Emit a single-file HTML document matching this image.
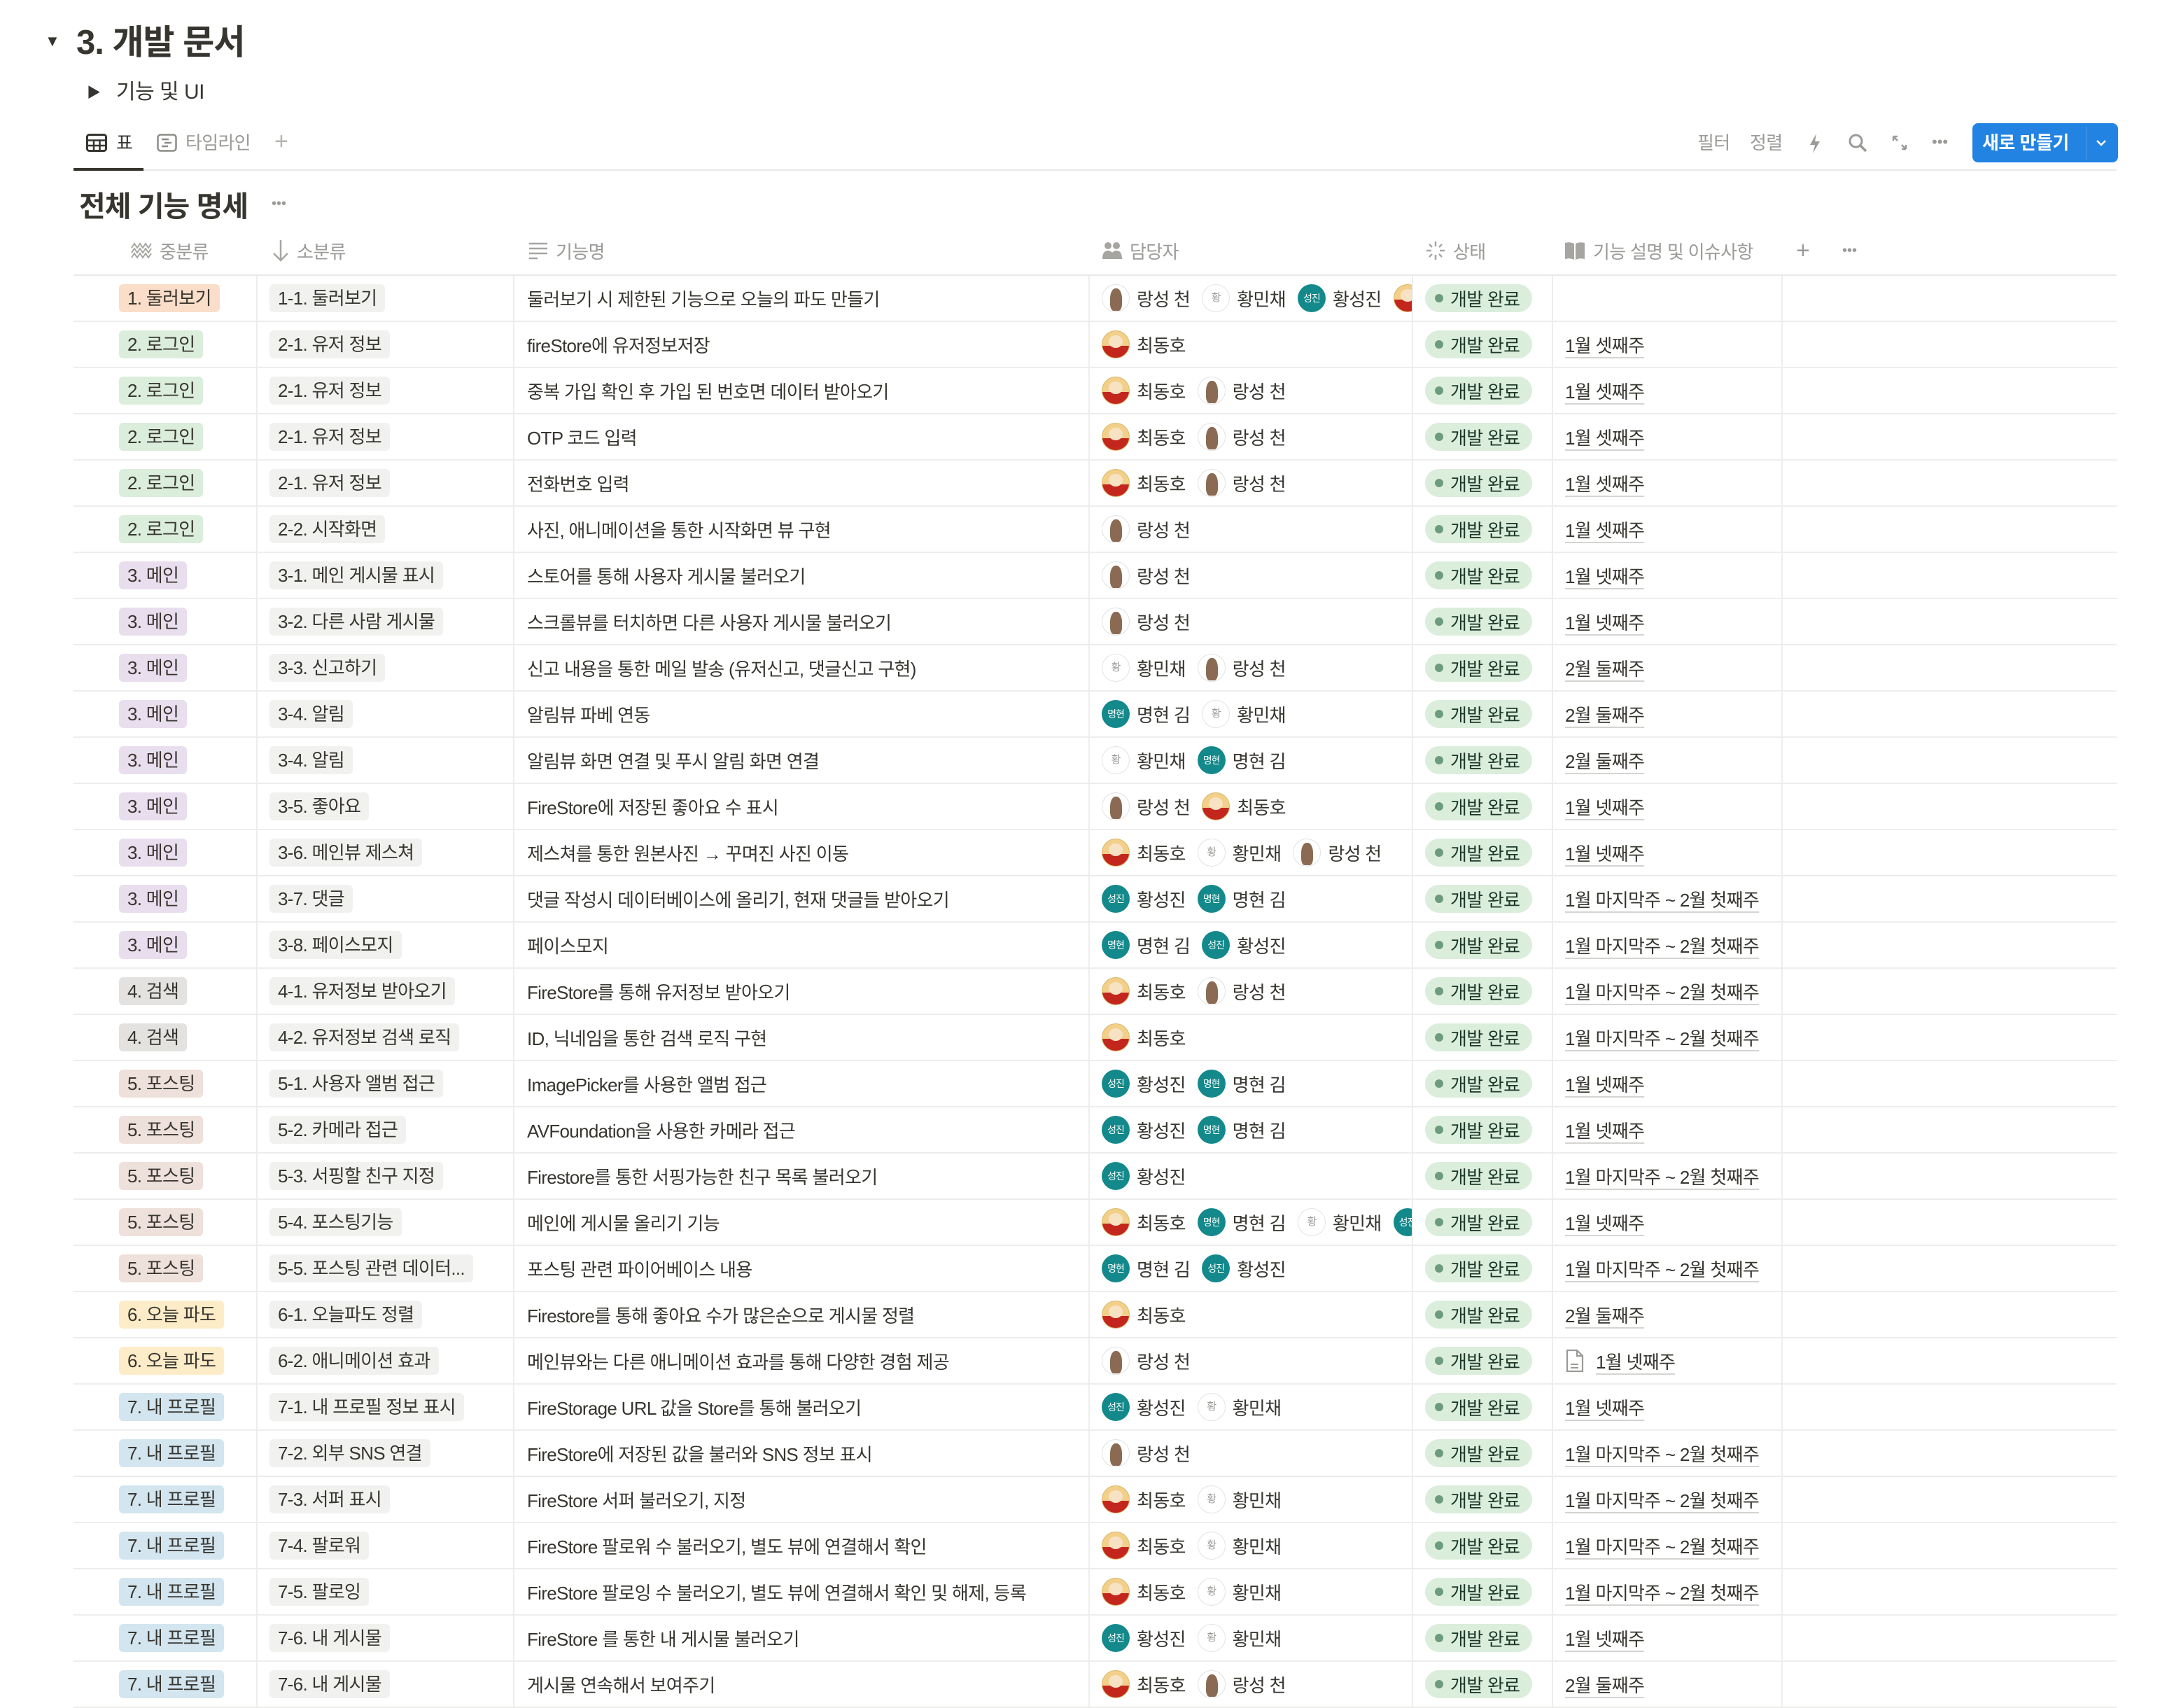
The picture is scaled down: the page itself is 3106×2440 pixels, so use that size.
<!DOCTYPE html>
<html><head><meta charset="utf-8"><style>
*{margin:0;padding:0;box-sizing:border-box}
body{width:3106px;height:2438px;background:#fff;position:relative;overflow:hidden;font-family:"Liberation Sans","Noto Sans CJK KR",sans-serif;color:#37352f;font-size:26px;letter-spacing:-0.7px}
.abs{position:absolute}
.g{color:#9b9a97}
#tbl{position:absolute;left:105px;top:392px;width:2919px;border-top:2px solid #e9e9e7}
.r{display:flex;height:66px;border-bottom:2px solid #ededec}
.c{height:64px;display:flex;align-items:center;overflow:hidden;white-space:nowrap;border-right:2px solid #ededec;padding-left:17px}
.c1{width:263px;padding-left:65px}
.c2{width:367px}
.c3{width:822px;padding-left:18px}
.c4{width:462px}
.c5{width:200px}
.c6{width:328px}
.c7{width:477px;border-right:none}
.t{display:inline-block;height:40px;line-height:40px;padding:0 12px;border-radius:6px}
.or{background:#fadec9}.gr{background:#dbeddb}.pu{background:#e8deee}.gy{background:#e3e2e0}.br{background:#eee0da}.ye{background:#fdecc8}.bl{background:#d3e5ef}.df{background:#f1f1ef}
.p{display:inline-flex;align-items:center;margin-right:17px}
.av{display:inline-block;width:40px;height:40px;border-radius:50%;margin-right:10px;position:relative;overflow:hidden;flex:none;font-style:normal;text-align:center;letter-spacing:-1px}
.ac{background:linear-gradient(#f2d08a 0 55%,#c3261d 55%);border:1px solid #d9b86a}
.ac::before{content:"";position:absolute;left:9px;top:6px;width:20px;height:18px;border-radius:50%;background:#f7e2c4}
.ar{background:#fff;border:1px solid #e2e2e2}
.ar::before{content:"";position:absolute;left:11px;top:5px;width:17px;height:32px;border-radius:45% 45% 30% 30%;background:#8a6a52}
.ah{background:#fff;border:1px solid #e3e3e3;color:#9b9a97;font-size:15px;line-height:38px}
.at{background:#13898b;color:#fff;font-size:14px;line-height:40px}
.st{display:inline-flex;align-items:center;height:40px;padding:0 18px 0 14px;border-radius:20px;background:#dbeddb;color:#1c3829}
.st::before{content:"";width:12px;height:12px;border-radius:50%;background:#6c9b7d;margin-right:10px}
.d{text-decoration:underline;text-decoration-color:#d5d4d1;text-decoration-thickness:2px;text-underline-offset:7px}
.h{position:absolute;top:340px;height:36px;display:flex;align-items:center;color:#9b9a97}
.h svg{margin-right:10px}
</style></head><body>

<div class="abs" style="left:64px;top:46px;font-size:22px;color:#37352f">▼</div>
<div class="abs" style="left:109px;top:28px;font-size:49px;font-weight:bold;letter-spacing:-1px;line-height:66px">3. 개발 문서</div>
<div class="abs" style="left:124px;top:116px;font-size:20px">▶</div>
<div class="abs" style="left:166px;top:112px;font-size:30px;line-height:40px;letter-spacing:-0.5px">기능 및 UI</div>

<svg class="abs" style="left:123px;top:191px" width="30" height="26" viewBox="0 0 30 26"><rect x="1.5" y="1.5" width="27" height="23" rx="3" fill="none" stroke="#37352f" stroke-width="3"/><path d="M1.5 9.5H28.5M1.5 17H28.5M11 9.5V24.5M19.5 9.5V24.5" stroke="#37352f" stroke-width="2.5"/></svg>
<div class="abs" style="left:166px;top:186px;font-size:26px;line-height:36px">표</div>
<svg class="abs" style="left:224px;top:191px" width="29" height="26" viewBox="0 0 29 26"><rect x="1.5" y="1.5" width="26" height="23" rx="4" fill="none" stroke="#8c8b87" stroke-width="2.5"/><path d="M7 8H17M11 13H21M7 18H16" stroke="#8c8b87" stroke-width="2.5"/></svg>
<div class="abs g" style="left:265px;top:186px;font-size:26px;line-height:36px">타임라인</div>
<div class="abs" style="left:392px;top:182px;font-size:34px;color:#b5b4b0;line-height:40px">+</div>
<div class="abs" style="left:105px;top:242px;width:2919px;height:2px;background:#e9e9e7"></div>
<div class="abs" style="left:105px;top:240px;width:100px;height:4px;background:#37352f"></div>

<div class="abs g" style="left:2425px;top:186px;line-height:36px">필터</div>
<div class="abs g" style="left:2500px;top:186px;line-height:36px">정렬</div>
<svg class="abs" style="left:2584px;top:190px" width="18" height="30" viewBox="0 0 18 30"><path d="M11 1L2 17H9L6 29L16 12H9Z" fill="#9b9a97"/></svg>
<svg class="abs" style="left:2640px;top:190px" width="28" height="28" viewBox="0 0 28 28"><circle cx="11.5" cy="11.5" r="8.5" fill="none" stroke="#9b9a97" stroke-width="3"/><path d="M18 18L26 26" stroke="#9b9a97" stroke-width="3.5"/></svg>
<svg class="abs" style="left:2702px;top:192px" width="24" height="24" viewBox="0 0 24 24"><path d="M3 3L9 9M3 3V9M3 3H9M21 21L15 15M21 21V15M21 21H15" stroke="#9b9a97" stroke-width="2.5" fill="none"/></svg>
<div class="abs g" style="left:2760px;top:190px;font-size:22px;letter-spacing:0">•••</div>
<div class="abs" style="left:2818px;top:176px;width:208px;height:56px;border-radius:8px;background:#2383e2"></div>
<div class="abs" style="left:2832px;top:186px;color:#fff;font-weight:bold;line-height:36px;letter-spacing:-0.5px">새로 만들기</div>
<div class="abs" style="left:2980px;top:180px;width:1px;height:48px;background:#4a9aea"></div>
<svg class="abs" style="left:2993px;top:197px" width="18" height="14" viewBox="0 0 18 14"><path d="M3 4L9 10L15 4" stroke="#fff" stroke-width="2.5" fill="none"/></svg>

<div class="abs" style="left:113px;top:268px;font-size:41px;font-weight:bold;line-height:54px;letter-spacing:-1px">전체 기능 명세</div>
<div class="abs" style="left:388px;top:280px;font-size:20px;color:#9b9a97;letter-spacing:0">•••</div>

<div class="h" style="left:186px"><svg width="32" height="26" viewBox="0 0 32 26"><path d="M2 9L6 3L10 9L14 3L18 9L22 3L26 9L30 3M2 16L6 10L10 16L14 10L18 16L22 10L26 16L30 10M2 23L6 17L10 23L14 17L18 23L22 17L26 23L30 17" stroke="#a6a5a1" stroke-width="2" fill="none"/></svg>중분류</div>
<div class="h" style="left:388px"><svg width="26" height="34" viewBox="0 0 26 34"><path d="M13 2V31M3 21L13 31L23 21" stroke="#a6a5a1" stroke-width="2.5" fill="none"/></svg>소분류</div>
<div class="h" style="left:754px"><svg width="30" height="28" viewBox="0 0 30 28"><path d="M2 4H28M2 11H28M2 18H28M2 25H14" stroke="#a6a5a1" stroke-width="2.5"/></svg>기능명</div>
<div class="h" style="left:1574px"><svg width="30" height="26" viewBox="0 0 30 26"><circle cx="9" cy="6" r="5" fill="#a6a5a1"/><circle cx="21" cy="6" r="5" fill="#a6a5a1"/><path d="M1 25Q1 13 9 13Q17 13 17 25ZM13 25Q13 13 21 13Q29 13 29 25Z" fill="#a6a5a1"/></svg>담당자</div>
<div class="h" style="left:2036px"><svg width="30" height="30" viewBox="0 0 30 30"><path d="M15 2V9M15 21V28M2 15H9M21 15H28M6 6L10 10M20 20L24 24M24 6L20 10M10 20L6 24" stroke="#a6a5a1" stroke-width="2.5"/></svg>상태</div>
<div class="h" style="left:2234px"><svg width="32" height="28" viewBox="0 0 32 28"><path d="M2 3Q9 1 15 4V27Q9 24 2 26ZM17 4Q23 1 30 3V26Q23 24 17 27Z" fill="#a6a5a1"/></svg>기능 설명 및 이슈사항</div>
<div class="h" style="left:2566px;font-size:34px">+</div>
<div class="h" style="left:2632px;font-size:20px;letter-spacing:0">•••</div>

<div id="tbl">
<div class="r"><div class="c c1"><span class="t or">1. 둘러보기</span></div><div class="c c2"><span class="t df">1-1. 둘러보기</span></div><div class="c c3">둘러보기 시 제한된 기능으로 오늘의 파도 만들기</div><div class="c c4"><span class="p"><i class="av ar"></i>랑성 천</span><span class="p"><i class="av ah">황</i>황민채</span><span class="p"><i class="av at">성진</i>황성진</span><span class="p"><i class="av ac"></i>최동호</span></div><div class="c c5"><span class="st">개발 완료</span></div><div class="c c6"></div><div class="c c7"></div></div>
<div class="r"><div class="c c1"><span class="t gr">2. 로그인</span></div><div class="c c2"><span class="t df">2-1. 유저 정보</span></div><div class="c c3">fireStore에 유저정보저장</div><div class="c c4"><span class="p"><i class="av ac"></i>최동호</span></div><div class="c c5"><span class="st">개발 완료</span></div><div class="c c6"><span class="d">1월 셋째주</span></div><div class="c c7"></div></div>
<div class="r"><div class="c c1"><span class="t gr">2. 로그인</span></div><div class="c c2"><span class="t df">2-1. 유저 정보</span></div><div class="c c3">중복 가입 확인 후 가입 된 번호면 데이터 받아오기</div><div class="c c4"><span class="p"><i class="av ac"></i>최동호</span><span class="p"><i class="av ar"></i>랑성 천</span></div><div class="c c5"><span class="st">개발 완료</span></div><div class="c c6"><span class="d">1월 셋째주</span></div><div class="c c7"></div></div>
<div class="r"><div class="c c1"><span class="t gr">2. 로그인</span></div><div class="c c2"><span class="t df">2-1. 유저 정보</span></div><div class="c c3">OTP 코드 입력</div><div class="c c4"><span class="p"><i class="av ac"></i>최동호</span><span class="p"><i class="av ar"></i>랑성 천</span></div><div class="c c5"><span class="st">개발 완료</span></div><div class="c c6"><span class="d">1월 셋째주</span></div><div class="c c7"></div></div>
<div class="r"><div class="c c1"><span class="t gr">2. 로그인</span></div><div class="c c2"><span class="t df">2-1. 유저 정보</span></div><div class="c c3">전화번호 입력</div><div class="c c4"><span class="p"><i class="av ac"></i>최동호</span><span class="p"><i class="av ar"></i>랑성 천</span></div><div class="c c5"><span class="st">개발 완료</span></div><div class="c c6"><span class="d">1월 셋째주</span></div><div class="c c7"></div></div>
<div class="r"><div class="c c1"><span class="t gr">2. 로그인</span></div><div class="c c2"><span class="t df">2-2. 시작화면</span></div><div class="c c3">사진, 애니메이션을 통한 시작화면 뷰 구현</div><div class="c c4"><span class="p"><i class="av ar"></i>랑성 천</span></div><div class="c c5"><span class="st">개발 완료</span></div><div class="c c6"><span class="d">1월 셋째주</span></div><div class="c c7"></div></div>
<div class="r"><div class="c c1"><span class="t pu">3. 메인</span></div><div class="c c2"><span class="t df">3-1. 메인 게시물 표시</span></div><div class="c c3">스토어를 통해 사용자 게시물 불러오기</div><div class="c c4"><span class="p"><i class="av ar"></i>랑성 천</span></div><div class="c c5"><span class="st">개발 완료</span></div><div class="c c6"><span class="d">1월 넷째주</span></div><div class="c c7"></div></div>
<div class="r"><div class="c c1"><span class="t pu">3. 메인</span></div><div class="c c2"><span class="t df">3-2. 다른 사람 게시물</span></div><div class="c c3">스크롤뷰를 터치하면 다른 사용자 게시물 불러오기</div><div class="c c4"><span class="p"><i class="av ar"></i>랑성 천</span></div><div class="c c5"><span class="st">개발 완료</span></div><div class="c c6"><span class="d">1월 넷째주</span></div><div class="c c7"></div></div>
<div class="r"><div class="c c1"><span class="t pu">3. 메인</span></div><div class="c c2"><span class="t df">3-3. 신고하기</span></div><div class="c c3">신고 내용을 통한 메일 발송 (유저신고, 댓글신고 구현)</div><div class="c c4"><span class="p"><i class="av ah">황</i>황민채</span><span class="p"><i class="av ar"></i>랑성 천</span></div><div class="c c5"><span class="st">개발 완료</span></div><div class="c c6"><span class="d">2월 둘째주</span></div><div class="c c7"></div></div>
<div class="r"><div class="c c1"><span class="t pu">3. 메인</span></div><div class="c c2"><span class="t df">3-4. 알림</span></div><div class="c c3">알림뷰 파베 연동</div><div class="c c4"><span class="p"><i class="av at">명현</i>명현 김</span><span class="p"><i class="av ah">황</i>황민채</span></div><div class="c c5"><span class="st">개발 완료</span></div><div class="c c6"><span class="d">2월 둘째주</span></div><div class="c c7"></div></div>
<div class="r"><div class="c c1"><span class="t pu">3. 메인</span></div><div class="c c2"><span class="t df">3-4. 알림</span></div><div class="c c3">알림뷰 화면 연결 및 푸시 알림 화면 연결</div><div class="c c4"><span class="p"><i class="av ah">황</i>황민채</span><span class="p"><i class="av at">명현</i>명현 김</span></div><div class="c c5"><span class="st">개발 완료</span></div><div class="c c6"><span class="d">2월 둘째주</span></div><div class="c c7"></div></div>
<div class="r"><div class="c c1"><span class="t pu">3. 메인</span></div><div class="c c2"><span class="t df">3-5. 좋아요</span></div><div class="c c3">FireStore에 저장된 좋아요 수 표시</div><div class="c c4"><span class="p"><i class="av ar"></i>랑성 천</span><span class="p"><i class="av ac"></i>최동호</span></div><div class="c c5"><span class="st">개발 완료</span></div><div class="c c6"><span class="d">1월 넷째주</span></div><div class="c c7"></div></div>
<div class="r"><div class="c c1"><span class="t pu">3. 메인</span></div><div class="c c2"><span class="t df">3-6. 메인뷰 제스쳐</span></div><div class="c c3">제스쳐를 통한 원본사진 → 꾸며진 사진 이동</div><div class="c c4"><span class="p"><i class="av ac"></i>최동호</span><span class="p"><i class="av ah">황</i>황민채</span><span class="p"><i class="av ar"></i>랑성 천</span></div><div class="c c5"><span class="st">개발 완료</span></div><div class="c c6"><span class="d">1월 넷째주</span></div><div class="c c7"></div></div>
<div class="r"><div class="c c1"><span class="t pu">3. 메인</span></div><div class="c c2"><span class="t df">3-7. 댓글</span></div><div class="c c3">댓글 작성시 데이터베이스에 올리기, 현재 댓글들 받아오기</div><div class="c c4"><span class="p"><i class="av at">성진</i>황성진</span><span class="p"><i class="av at">명현</i>명현 김</span></div><div class="c c5"><span class="st">개발 완료</span></div><div class="c c6"><span class="d">1월 마지막주 ~ 2월 첫째주</span></div><div class="c c7"></div></div>
<div class="r"><div class="c c1"><span class="t pu">3. 메인</span></div><div class="c c2"><span class="t df">3-8. 페이스모지</span></div><div class="c c3">페이스모지</div><div class="c c4"><span class="p"><i class="av at">명현</i>명현 김</span><span class="p"><i class="av at">성진</i>황성진</span></div><div class="c c5"><span class="st">개발 완료</span></div><div class="c c6"><span class="d">1월 마지막주 ~ 2월 첫째주</span></div><div class="c c7"></div></div>
<div class="r"><div class="c c1"><span class="t gy">4. 검색</span></div><div class="c c2"><span class="t df">4-1. 유저정보 받아오기</span></div><div class="c c3">FireStore를 통해 유저정보 받아오기</div><div class="c c4"><span class="p"><i class="av ac"></i>최동호</span><span class="p"><i class="av ar"></i>랑성 천</span></div><div class="c c5"><span class="st">개발 완료</span></div><div class="c c6"><span class="d">1월 마지막주 ~ 2월 첫째주</span></div><div class="c c7"></div></div>
<div class="r"><div class="c c1"><span class="t gy">4. 검색</span></div><div class="c c2"><span class="t df">4-2. 유저정보 검색 로직</span></div><div class="c c3">ID, 닉네임을 통한 검색 로직 구현</div><div class="c c4"><span class="p"><i class="av ac"></i>최동호</span></div><div class="c c5"><span class="st">개발 완료</span></div><div class="c c6"><span class="d">1월 마지막주 ~ 2월 첫째주</span></div><div class="c c7"></div></div>
<div class="r"><div class="c c1"><span class="t br">5. 포스팅</span></div><div class="c c2"><span class="t df">5-1. 사용자 앨범 접근</span></div><div class="c c3">ImagePicker를 사용한 앨범 접근</div><div class="c c4"><span class="p"><i class="av at">성진</i>황성진</span><span class="p"><i class="av at">명현</i>명현 김</span></div><div class="c c5"><span class="st">개발 완료</span></div><div class="c c6"><span class="d">1월 넷째주</span></div><div class="c c7"></div></div>
<div class="r"><div class="c c1"><span class="t br">5. 포스팅</span></div><div class="c c2"><span class="t df">5-2. 카메라 접근</span></div><div class="c c3">AVFoundation을 사용한 카메라 접근</div><div class="c c4"><span class="p"><i class="av at">성진</i>황성진</span><span class="p"><i class="av at">명현</i>명현 김</span></div><div class="c c5"><span class="st">개발 완료</span></div><div class="c c6"><span class="d">1월 넷째주</span></div><div class="c c7"></div></div>
<div class="r"><div class="c c1"><span class="t br">5. 포스팅</span></div><div class="c c2"><span class="t df">5-3. 서핑할 친구 지정</span></div><div class="c c3">Firestore를 통한 서핑가능한 친구 목록 불러오기</div><div class="c c4"><span class="p"><i class="av at">성진</i>황성진</span></div><div class="c c5"><span class="st">개발 완료</span></div><div class="c c6"><span class="d">1월 마지막주 ~ 2월 첫째주</span></div><div class="c c7"></div></div>
<div class="r"><div class="c c1"><span class="t br">5. 포스팅</span></div><div class="c c2"><span class="t df">5-4. 포스팅기능</span></div><div class="c c3">메인에 게시물 올리기 기능</div><div class="c c4"><span class="p"><i class="av ac"></i>최동호</span><span class="p"><i class="av at">명현</i>명현 김</span><span class="p"><i class="av ah">황</i>황민채</span><span class="p"><i class="av at">성진</i>황성진</span></div><div class="c c5"><span class="st">개발 완료</span></div><div class="c c6"><span class="d">1월 넷째주</span></div><div class="c c7"></div></div>
<div class="r"><div class="c c1"><span class="t br">5. 포스팅</span></div><div class="c c2"><span class="t df">5-5. 포스팅 관련 데이터...</span></div><div class="c c3">포스팅 관련 파이어베이스 내용</div><div class="c c4"><span class="p"><i class="av at">명현</i>명현 김</span><span class="p"><i class="av at">성진</i>황성진</span></div><div class="c c5"><span class="st">개발 완료</span></div><div class="c c6"><span class="d">1월 마지막주 ~ 2월 첫째주</span></div><div class="c c7"></div></div>
<div class="r"><div class="c c1"><span class="t ye">6. 오늘 파도</span></div><div class="c c2"><span class="t df">6-1. 오늘파도 정렬</span></div><div class="c c3">Firestore를 통해 좋아요 수가 많은순으로 게시물 정렬</div><div class="c c4"><span class="p"><i class="av ac"></i>최동호</span></div><div class="c c5"><span class="st">개발 완료</span></div><div class="c c6"><span class="d">2월 둘째주</span></div><div class="c c7"></div></div>
<div class="r"><div class="c c1"><span class="t ye">6. 오늘 파도</span></div><div class="c c2"><span class="t df">6-2. 애니메이션 효과</span></div><div class="c c3">메인뷰와는 다른 애니메이션 효과를 통해 다양한 경험 제공</div><div class="c c4"><span class="p"><i class="av ar"></i>랑성 천</span></div><div class="c c5"><span class="st">개발 완료</span></div><div class="c c6"><svg width="28" height="34" viewBox="0 0 28 34" style="margin-right:16px"><path d="M3 2H17L25 10V32H3Z M17 2V10H25" fill="none" stroke="#9b9a97" stroke-width="2.2"/><path d="M8 22H19M8 27H19" stroke="#9b9a97" stroke-width="2"/></svg><span class="d">1월 넷째주</span></div><div class="c c7"></div></div>
<div class="r"><div class="c c1"><span class="t bl">7. 내 프로필</span></div><div class="c c2"><span class="t df">7-1. 내 프로필 정보 표시</span></div><div class="c c3">FireStorage URL 값을 Store를 통해 불러오기</div><div class="c c4"><span class="p"><i class="av at">성진</i>황성진</span><span class="p"><i class="av ah">황</i>황민채</span></div><div class="c c5"><span class="st">개발 완료</span></div><div class="c c6"><span class="d">1월 넷째주</span></div><div class="c c7"></div></div>
<div class="r"><div class="c c1"><span class="t bl">7. 내 프로필</span></div><div class="c c2"><span class="t df">7-2. 외부 SNS 연결</span></div><div class="c c3">FireStore에 저장된 값을 불러와 SNS 정보 표시</div><div class="c c4"><span class="p"><i class="av ar"></i>랑성 천</span></div><div class="c c5"><span class="st">개발 완료</span></div><div class="c c6"><span class="d">1월 마지막주 ~ 2월 첫째주</span></div><div class="c c7"></div></div>
<div class="r"><div class="c c1"><span class="t bl">7. 내 프로필</span></div><div class="c c2"><span class="t df">7-3. 서퍼 표시</span></div><div class="c c3">FireStore 서퍼 불러오기, 지정</div><div class="c c4"><span class="p"><i class="av ac"></i>최동호</span><span class="p"><i class="av ah">황</i>황민채</span></div><div class="c c5"><span class="st">개발 완료</span></div><div class="c c6"><span class="d">1월 마지막주 ~ 2월 첫째주</span></div><div class="c c7"></div></div>
<div class="r"><div class="c c1"><span class="t bl">7. 내 프로필</span></div><div class="c c2"><span class="t df">7-4. 팔로워</span></div><div class="c c3">FireStore 팔로워 수 불러오기, 별도 뷰에 연결해서 확인</div><div class="c c4"><span class="p"><i class="av ac"></i>최동호</span><span class="p"><i class="av ah">황</i>황민채</span></div><div class="c c5"><span class="st">개발 완료</span></div><div class="c c6"><span class="d">1월 마지막주 ~ 2월 첫째주</span></div><div class="c c7"></div></div>
<div class="r"><div class="c c1"><span class="t bl">7. 내 프로필</span></div><div class="c c2"><span class="t df">7-5. 팔로잉</span></div><div class="c c3">FireStore 팔로잉 수 불러오기, 별도 뷰에 연결해서 확인 및 해제, 등록</div><div class="c c4"><span class="p"><i class="av ac"></i>최동호</span><span class="p"><i class="av ah">황</i>황민채</span></div><div class="c c5"><span class="st">개발 완료</span></div><div class="c c6"><span class="d">1월 마지막주 ~ 2월 첫째주</span></div><div class="c c7"></div></div>
<div class="r"><div class="c c1"><span class="t bl">7. 내 프로필</span></div><div class="c c2"><span class="t df">7-6. 내 게시물</span></div><div class="c c3">FireStore 를 통한 내 게시물 불러오기</div><div class="c c4"><span class="p"><i class="av at">성진</i>황성진</span><span class="p"><i class="av ah">황</i>황민채</span></div><div class="c c5"><span class="st">개발 완료</span></div><div class="c c6"><span class="d">1월 넷째주</span></div><div class="c c7"></div></div>
<div class="r"><div class="c c1"><span class="t bl">7. 내 프로필</span></div><div class="c c2"><span class="t df">7-6. 내 게시물</span></div><div class="c c3">게시물 연속해서 보여주기</div><div class="c c4"><span class="p"><i class="av ac"></i>최동호</span><span class="p"><i class="av ar"></i>랑성 천</span></div><div class="c c5"><span class="st">개발 완료</span></div><div class="c c6"><span class="d">2월 둘째주</span></div><div class="c c7"></div></div>
</div>
</body></html>
